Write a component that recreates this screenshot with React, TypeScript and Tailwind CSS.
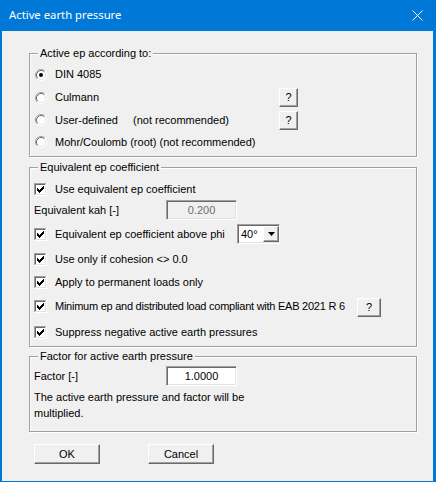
import React from "react";

const sunken =
  "border border-t-[#a0a0a0] border-l-[#a0a0a0] border-b-white border-r-white shadow-[inset_1px_1px_0_#696969,inset_-1px_-1px_0_#e3e3e3]";
const raised =
  "border border-t-white border-l-white border-b-[#696969] border-r-[#696969] shadow-[inset_-1px_-1px_0_#a0a0a0] bg-[#f0f0f0]";

function Radio({ on }: { on?: boolean }) {
  return (
    <svg width="12" height="12" viewBox="0 0 12 12" className="shrink-0">
      <circle cx="6" cy="6" r="5.5" fill="#fff" />
      <path d="M2.11 9.89 A5.5 5.5 0 0 1 9.89 2.11" stroke="#a0a0a0" fill="none" />
      <path d="M2.82 9.18 A4.5 4.5 0 0 1 9.18 2.82" stroke="#696969" fill="none" />
      <path d="M9.89 2.11 A5.5 5.5 0 0 1 2.11 9.89" stroke="#ffffff" fill="none" />
      <path d="M9.18 2.82 A4.5 4.5 0 0 1 2.82 9.18" stroke="#e3e3e3" fill="none" />
      {on && <circle cx="6" cy="6" r="2" fill="#000" />}
    </svg>
  );
}

function Check() {
  const cols: [number, number][] = [
    [0, 2],
    [1, 3],
    [2, 4],
    [3, 3],
    [4, 2],
    [5, 1],
    [6, 0],
  ];
  return (
    <svg width="13" height="13" viewBox="0 0 13 13" className="shrink-0" shapeRendering="crispEdges">
      <rect x="0" y="0" width="13" height="13" fill="#fff" />
      <rect x="0" y="0" width="12" height="1" fill="#a0a0a0" />
      <rect x="0" y="0" width="1" height="12" fill="#a0a0a0" />
      <rect x="1" y="1" width="10" height="1" fill="#696969" />
      <rect x="1" y="1" width="1" height="10" fill="#696969" />
      <rect x="1" y="11" width="11" height="1" fill="#e3e3e3" />
      <rect x="11" y="1" width="1" height="11" fill="#e3e3e3" />
      {cols.map(([x, y]) => (
        <rect key={x} x={3 + x} y={3 + y} width="1" height="3" fill="#000" />
      ))}
    </svg>
  );
}

function Group({
  title,
  className,
  children,
}: {
  title: string;
  className: string;
  children: React.ReactNode;
}) {
  return (
    <div
      className={
        "relative ml-[27px] w-[388px] border border-[#a0a0a0] shadow-[inset_1px_1px_0_#fff,1px_1px_0_#fff] " +
        className
      }
    >
      <span className="absolute left-[8px] -top-[9px] px-[2px] leading-[16px] bg-[#f0f0f0] whitespace-nowrap">
        {title}
      </span>
      {children}
    </div>
  );
}

function Help({ w = 19, h = 19 }: { w?: number; h?: number }) {
  return (
    <button
      className={raised + " flex items-center justify-center leading-none"}
      style={{ width: w, height: h }}
    >
      ?
    </button>
  );
}

function CheckRow({ label, h }: { label: string; h: string }) {
  return (
    <div className={"flex items-center " + h}>
      <Check />
      <span className="ml-[8px] whitespace-nowrap">{label}</span>
    </div>
  );
}

export default function App() {
  return (
    <div
      className="w-[436px] h-[482px] bg-[#0078d7] flex flex-col pl-[2px] pr-[3px] pb-[1px] text-[11px] text-black"
      style={{ fontFamily: '"Liberation Sans", Arial, sans-serif' }}
    >
      <div className="h-[31px] flex items-center justify-between pl-[7px] pr-[10px] shrink-0">
        <span
          className="text-white text-[11.3px]"
          style={{ fontFamily: '"Segoe UI", "Noto Sans", sans-serif' }}
        >
          Active earth pressure
        </span>
        <svg width="11" height="11" viewBox="0 0 11 11">
          <path d="M0.5 0.5 L10.5 10.5 M10.5 0.5 L0.5 10.5" stroke="#fff" strokeWidth="1" />
        </svg>
      </div>
      <div className="flex-1 bg-[#f0f0f0] flex flex-col">
        <Group title="Active ep according to:" className="mt-[22px] h-[104px] pt-[9px] pl-[5px]">
          <div className="flex items-center h-[23px]">
            <Radio on />
            <span className="ml-[8px]">DIN 4085</span>
          </div>
          <div className="flex items-center h-[23px]">
            <div className="flex items-center w-[244px]">
              <Radio />
              <span className="ml-[8px]">Culmann</span>
            </div>
            <Help />
          </div>
          <div className="flex items-center h-[22px]">
            <div className="flex items-center w-[244px]">
              <Radio />
              <span className="ml-[8px] w-[78px]">User-defined</span>
              <span>(not recommended)</span>
            </div>
            <Help />
          </div>
          <div className="flex items-center h-[22px]">
            <Radio />
            <span className="ml-[8px]">Mohr/Coulomb (root) (not recommended)</span>
          </div>
        </Group>

        <Group title="Equivalent ep coefficient" className="mt-[10px] h-[180px] pt-[10px] pl-[4px]">
          <CheckRow label="Use equivalent ep coefficient" h="h-[22px]" />
          <div className="flex items-center h-[20px]">
            <span className="w-[132px]">Equivalent kah [-]</span>
            <div
              className={
                sunken +
                " w-[71px] h-[20px] bg-[#f0f0f0] text-[#6d6d6d] flex items-center justify-center"
              }
            >
              0.200
            </div>
          </div>
          <div className="flex items-center h-[28px]">
            <div className="flex items-center w-[203px]">
              <Check />
              <span className="ml-[8px] whitespace-nowrap">Equivalent ep coefficient above phi</span>
            </div>
            <div className={sunken + " w-[43px] h-[20px] bg-white flex items-center"}>
              <span className="pl-[3px] flex-1">40°</span>
              <div className={raised + " w-[16px] h-[16px] flex items-center justify-center"}>
                <svg width="7" height="4" viewBox="0 0 7 4">
                  <path d="M0 0 H7 L3.5 4 Z" fill="#000" />
                </svg>
              </div>
            </div>
          </div>
          <CheckRow label="Use only if cohesion <> 0.0" h="h-[22px]" />
          <CheckRow label="Apply to permanent loads only" h="h-[24px]" />
          <div className="flex items-center h-[24px]">
            <div className="flex items-center w-[323px]">
              <Check />
              <span className="ml-[8px] whitespace-nowrap tracking-[-0.25px]">
                Minimum ep and distributed load compliant with EAB 2021 R 6
              </span>
            </div>
            <div className="pt-[2px]">
              <Help w={24} h={19} />
            </div>
          </div>
          <CheckRow label="Suppress negative active earth pressures" h="h-[28px]" />
        </Group>

        <Group title="Factor for active earth pressure" className="mt-[9px] h-[76px] pt-[9px] pl-[4px]">
          <div className="flex items-center h-[20px]">
            <span className="w-[132px]">Factor [-]</span>
            <div className={sunken + " w-[71px] h-[20px] bg-white flex items-center justify-center"}>
              1.0000
            </div>
          </div>
          <div className="mt-[3px] leading-[16px] w-[240px]">
            The active earth pressure and factor will be multiplied.
          </div>
        </Group>

        <div className="flex mt-[12px] ml-[32px] gap-[48px]">
          <button className={raised + " w-[66px] h-[20px] flex items-center justify-center"}>OK</button>
          <button className={raised + " w-[66px] h-[20px] flex items-center justify-center"}>Cancel</button>
        </div>
      </div>
    </div>
  );
}
